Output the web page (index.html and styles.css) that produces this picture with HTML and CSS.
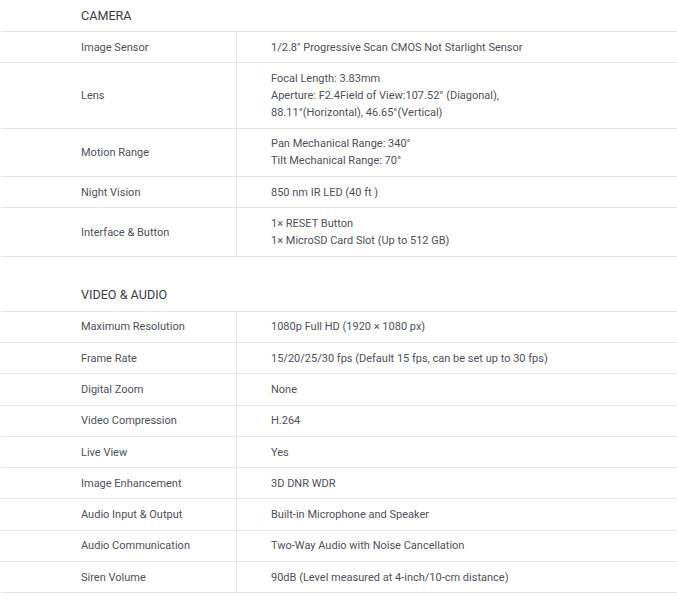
FILE: index.html
```html
<!DOCTYPE html>
<html>
<head>
<meta charset="utf-8">
<link rel="stylesheet" href="styles.css">
</head>
<body>
<div class="specs">
  <section class="group">
    <h3 class="group-title">CAMERA</h3>
    <div class="table">
      <div class="row"><div class="label">Image Sensor</div><div class="value">1/2.8" Progressive Scan CMOS Not Starlight Sensor</div></div>
      <div class="row"><div class="label">Lens</div><div class="value">Focal Length: 3.83mm<br>Aperture: F2.4Field of View:107.52° (Diagonal),<br>88.11°(Horizontal), 46.65°(Vertical)</div></div>
      <div class="row"><div class="label">Motion Range</div><div class="value">Pan Mechanical Range: 340°<br>Tilt Mechanical Range: 70°</div></div>
      <div class="row"><div class="label">Night Vision</div><div class="value">850 nm IR LED (40 ft )</div></div>
      <div class="row"><div class="label">Interface &amp; Button</div><div class="value">1× RESET Button<br>1× MicroSD Card Slot (Up to 512 GB)</div></div>
    </div>
  </section>
  <section class="group">
    <h3 class="group-title">VIDEO &amp; AUDIO</h3>
    <div class="table">
      <div class="row"><div class="label">Maximum Resolution</div><div class="value">1080p Full HD (1920 × 1080 px)</div></div>
      <div class="row"><div class="label">Frame Rate</div><div class="value">15/20/25/30 fps (Default 15 fps, can be set up to 30 fps)</div></div>
      <div class="row"><div class="label">Digital Zoom</div><div class="value">None</div></div>
      <div class="row"><div class="label">Video Compression</div><div class="value">H.264</div></div>
      <div class="row"><div class="label">Live View</div><div class="value">Yes</div></div>
      <div class="row"><div class="label">Image Enhancement</div><div class="value">3D DNR WDR</div></div>
      <div class="row"><div class="label">Audio Input &amp; Output</div><div class="value">Built-in Microphone and Speaker</div></div>
      <div class="row"><div class="label">Audio Communication</div><div class="value">Two-Way Audio with Noise Cancellation</div></div>
      <div class="row"><div class="label">Siren Volume</div><div class="value">90dB (Level measured at 4-inch/10-cm distance)</div></div>
    </div>
  </section>
</div>
</body>
</html>
```
FILE: styles.css
```css
html, body {
  margin: 0;
  padding: 0;
  background: #ffffff;
}
body {
  font-family: Roboto, Inter, "Noto Sans", sans-serif;
  font-size: 11px;
  color: #4f4f5c;
}
.specs {
  padding-left: 1px;
}
.group + .group {
  margin-top: 23px;
}
.group-title {
  margin: 0;
  padding: 6.5px 0 7.5px 80px;
  font-size: 12.6px;
  font-weight: 400;
  line-height: 17px;
  color: #3a3a46;
}
.table {
  border-top: 1px solid #e6e6ea;
}
.row {
  display: grid;
  grid-template-columns: 236px 1fr;
  border-bottom: 1px solid #e6e6ea;
}
.label {
  display: flex;
  align-items: center;
  padding: 6.6px 0 6.6px 80px;
  line-height: 17.1px;
  border-right: 1px solid #e6e6ea;
}
.value {
  padding: 6.6px 0 6.6px 34px;
  line-height: 17.1px;
}
```
